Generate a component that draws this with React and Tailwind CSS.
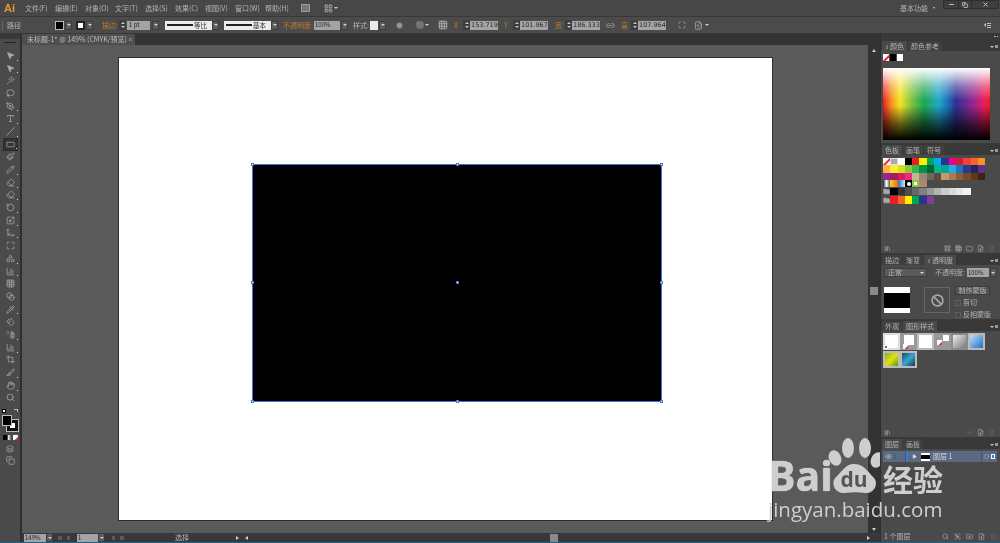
import {
  MousePointer2, Wand, Lasso, PenTool, Type, Slash, RectangleHorizontal, Paintbrush, Pencil, Eraser, RotateCcw,
  Scaling, Shapes, Grid3x3, Blend, Pipette, Droplets, SprayCan, ChartColumn, Crop, Slice, Hand, Search, Move3d,
  Layers, Copy, Eye, Play, Trash2, FilePlus, Folder, Link2, Ban, Minus, X, Circle, FolderPlus, Library,
  Maximize, LayoutGrid, FileImage, Group,
} from 'lucide-react';

const cjk = { fontFamily: '"Noto Sans CJK SC", "Liberation Sans", sans-serif' };

const menus = ['文件(F)', '编辑(E)', '对象(O)', '文字(T)', '选择(S)', '效果(C)', '视图(V)', '窗口(W)', '帮助(H)'];

const tools = [
  [MousePointer2, 1], [MousePointer2, 1], [Wand, 0], [Lasso, 0], [PenTool, 1], [Type, 1], [Slash, 1], [RectangleHorizontal, 1], [Paintbrush, 0],
  [Pencil, 1], [Eraser, 1], [Eraser, 1], [RotateCcw, 1], [Scaling, 1], [Move3d, 1], [Maximize, 0], [Shapes, 1], [ChartColumn, 1],
  [Grid3x3, 0], [Blend, 0], [Pipette, 1], [Droplets, 0], [SprayCan, 1], [ChartColumn, 1], [Crop, 0], [Slice, 1], [Hand, 1], [Search, 0],
];

const swatches = [
  ['none', 'reg', '#ffffff', '#000000', '#ed1c24', '#fff200', '#00a651', '#00aeef', '#2e3192', '#ec008c', '#cc1f36', '#ef4136', '#f26522', '#f7941d'],
  ['#fbb040', '#f9ed32', '#d7df23', '#8dc63f', '#39b54a', '#009444', '#006838', '#10b084', '#00a79d', '#27aae1', '#1c75bc', '#2b3990', '#262262', '#662d91'],
  ['#92278f', '#9e1f63', '#da1c5c', '#ee2a7b', '#c2b59b', '#9b8579', '#726658', '#594a42', '#c49a6c', '#a97c50', '#8b5e3c', '#754c29', '#603913', '#3c2415'],
];

const grays = ['#000000', '#333333', '#4d4d4d', '#666666', '#808080', '#999999', '#b3b3b3', '#cccccc', '#d9d9d9', '#e6e6e6', '#f2f2f2'];
const brights = ['#ed1c24', '#f26522', '#fff200', '#00a651', '#2e3192', '#7f3f98'];

function Label({ children, className = '' }) {
  return <span style={cjk} className={`text-[7px] leading-none whitespace-nowrap text-[#b4b4b4] ${className}`}>{children}</span>;
}

function DropArrow({ className = '' }) {
  return (
    <div className={`w-[7px] h-[9px] bg-[#5c5c5c] border border-[#3d3d3d] flex items-center justify-center shrink-0 ${className}`}>
      <div className="w-0 h-0 border-x-[2px] border-x-transparent border-t-[2px] border-t-[#d0d0d0]" />
    </div>
  );
}

function Spinner({ className = '' }) {
  return (
    <div className={`w-[7px] h-[10px] bg-[#3d3d3d] flex flex-col items-center justify-center gap-[2px] shrink-0 ${className}`}>
      <div className="w-0 h-0 border-x-[2px] border-x-transparent border-b-[2px] border-b-[#c8c8c8]" />
      <div className="w-0 h-0 border-x-[2px] border-x-transparent border-t-[2px] border-t-[#c8c8c8]" />
    </div>
  );
}

function NumBox({ value, className = '' }) {
  return (
    <div className={`w-[28px] h-[9px] bg-[#a4a4a4] flex items-center pl-[1px] shrink-0 ${className}`}>
      <span className="text-[6.5px] leading-none text-[#2c2c2c] whitespace-nowrap" style={{ fontFamily: '"DejaVu Sans", sans-serif' }}>{value}</span>
    </div>
  );
}

function Orange({ children, className = '' }) {
  return <span style={cjk} className={`text-[7px] leading-none whitespace-nowrap text-[#bf7a2c] shrink-0 ${className}`}>{children}</span>;
}

function StrokePreview({ label, className = '' }) {
  return (
    <div className={`w-[47px] h-[9px] bg-[#ececec] flex items-center pl-[2px] gap-[1px] shrink-0 ${className}`}>
      <div className="w-[26px] h-[1.5px] bg-[#222]" />
      <span style={cjk} className="text-[6.5px] leading-none text-[#333]">{label}</span>
    </div>
  );
}

function NoneSwatch({ className = '' }) {
  return (
    <div className={`bg-white relative overflow-hidden ${className}`}>
      <div className="absolute left-[-3px] top-[3px] w-[14px] h-[1.5px] bg-[#e8262d] -rotate-45" />
    </div>
  );
}

function Tabs({ items, active, menu = true, marker = false }) {
  return (
    <div className="h-[11px] bg-[#383838] flex items-end pl-[1px] shrink-0">
      {items.map((t, i) => (
        <div key={t} className={`h-[10px] px-[3px] flex items-center ${i === active ? 'bg-[#4a4a4a]' : 'bg-[#404040]'} mr-[1px]`}>
          {marker && i === active && <span className="text-[5px] text-[#aaa] mr-[1px] leading-none">⇕</span>}
          <Label className={i === active ? '' : 'text-[#7f7f7f]'}>{t}</Label>
        </div>
      ))}
      {menu && (
        <div className="ml-auto mr-[2px] mb-[3px] flex items-center gap-[1px]">
          <div className="w-0 h-0 border-x-[2px] border-x-transparent border-t-[2px] border-t-[#c8c8c8]" />
          <div className="w-[3px] h-[3px] bg-[#999]" />
        </div>
      )}
    </div>
  );
}

function Footer({ left, icons }) {
  return (
    <div className="h-[9px] mt-auto flex items-center px-[3px] shrink-0">
      {left}
      <div className="ml-auto flex items-center gap-[4px] mr-[2px]">
        {icons.map(([Icon, dim], i) => <Icon key={i} size={7} strokeWidth={2} className={dim ? 'text-[#666]' : 'text-[#b0b0b0]'} />)}
      </div>
    </div>
  );
}

function Handle({ className }) {
  return <div className={`absolute w-[3px] h-[3px] bg-white border-[0.5px] border-[#4a70d8] ${className}`} />;
}

function StyleCell({ bg = 'bg-[#bbb]', children }) {
  return <div className={`relative ${bg} p-[2px]`}>{children}</div>;
}

export default function App() {
  return (
    <div style={cjk} className="relative w-[1000px] h-[543px] overflow-hidden flex flex-col bg-[#4a4a4a] blur-[0.3px]">
      {/* menu */}
      <div className="h-[17px] bg-[#474747] border-b border-[#383838] flex items-center shrink-0">
        <span className="w-[25px] pl-[4px] text-[11px] font-bold leading-none text-[#e49a2c]" style={{ fontFamily: '"Liberation Sans", sans-serif' }}>Ai</span>
        <div className="flex gap-[9px]">
          {menus.map(m => <Label key={m} className="w-[21px]">{m}</Label>)}
        </div>
        <div className="ml-[15px] w-[9px] h-[8px] bg-[#777] border border-[#999]" />
        <div className="ml-[14px] flex items-center gap-[1px]">
          <LayoutGrid size={9} className="text-[#c0c0c0]" />
          <div className="w-0 h-0 border-x-[2px] border-x-transparent border-t-[2px] border-t-[#ccc]" />
        </div>
        <Label className="ml-auto mr-[5px]">基本功能</Label>
        <div className="w-0 h-0 border-x-[1.5px] border-x-transparent border-t-[2px] border-t-[#ccc] mr-[8px]" />
        <div className="self-start flex h-[9px] w-[56px] bg-[#3e3e3e] border border-[#2e2e2e] rounded-b-[1px] mr-[1px]">
          <div className="w-[14px] flex items-center justify-center"><Minus size={7} strokeWidth={3} className="text-[#ccc]" /></div>
          <div className="w-[14px] flex items-center justify-center border-x border-[#2e2e2e]"><Copy size={6} strokeWidth={3} className="text-[#ccc]" /></div>
          <div className="flex-1 flex items-center justify-center"><X size={7} strokeWidth={3} className="text-[#ccc]" /></div>
        </div>
      </div>

      {/* control bar */}
      <div className="h-[17px] bg-[#4b4b4b] border-b border-[#383838] flex items-center shrink-0">
        <div className="w-[1px] h-[9px] bg-[#666] ml-[2px]" />
        <Label className="ml-[4px] w-[34px]">路径</Label>
        <div className="w-[9px] h-[9px] bg-black border border-[#bbb] ml-[14px] shrink-0" />
        <DropArrow className="ml-[1px]" />
        <div className="w-[9px] h-[9px] bg-white border-[2px] border-[#222] ml-[4px] shrink-0" />
        <DropArrow className="ml-[1px]" />
        <Orange className="ml-[9px] w-[15px]">描边:</Orange>
        <Spinner className="ml-[2px]" />
        <div className="w-[23px] h-[9px] bg-[#a4a4a4] flex items-center pl-[2px] ml-[1px]"><span className="text-[6px] leading-none text-[#222]">1 pt</span></div>
        <DropArrow className="ml-[2px]" />
        <StrokePreview label="等比" className="ml-[6px]" />
        <DropArrow className="ml-0" />
        <StrokePreview label="基本" className="ml-[5px]" />
        <DropArrow className="ml-0" />
        <Orange className="ml-[5px] w-[27px]">不透明度:</Orange>
        <div className="w-[26px] h-[9px] bg-[#a4a4a4] flex items-center pl-[1px] ml-[4px]"><span className="text-[6px] leading-none text-[#222]">100%</span></div>
        <DropArrow className="ml-[1px]" />
        <Label className="ml-[5px] w-[14px]">样式:</Label>
        <div className="w-[8px] h-[9px] bg-[#ececec] ml-[3px]" />
        <DropArrow className="ml-[1px]" />
        <div className="w-[7px] h-[7px] rounded-full bg-[#999] border border-[#666] ml-[10px]" />
        <Grid3x3 size={8} className="text-[#999] ml-[13px]" />
        <div className="w-0 h-0 border-x-[2px] border-x-transparent border-t-[2px] border-t-[#ccc] ml-[1px]" />
        <Grid3x3 size={10} className="text-[#bbb] ml-[9px]" />
        <Orange className="ml-[6px] w-[7px]">X</Orange>
        <Spinner className="ml-[2px]" />
        <NumBox value="153.719" className="ml-0" />
        <Orange className="ml-[6px] w-[7px]">Y</Orange>
        <Spinner className="ml-[2px]" />
        <NumBox value="101.967" className="ml-0" />
        <Orange className="ml-[7px] w-[8px]">宽</Orange>
        <Spinner className="ml-[2px]" />
        <NumBox value="186.333" className="ml-0" />
        <Link2 size={9} className="text-[#aaa] ml-[6px]" />
        <Orange className="ml-[6px] w-[8px]">高</Orange>
        <Spinner className="ml-[2px]" />
        <NumBox value="107.964" className="ml-0" />
        <Maximize size={8} className="text-[#aaa] ml-[12px]" />
        <FileImage size={9} className="text-[#aaa] ml-[8px]" />
        <div className="w-0 h-0 border-x-[2px] border-x-transparent border-t-[2px] border-t-[#ccc] ml-[2px]" />
        <div className="ml-auto mr-[9px] flex items-center gap-[1px]">
          <div className="w-0 h-0 border-y-[2px] border-y-transparent border-r-[2px] border-r-[#ccc]" />
          <div className="flex flex-col gap-[1px]">
            <div className="w-[4px] h-[1px] bg-[#bbb]" />
            <div className="w-[4px] h-[1px] bg-[#bbb]" />
            <div className="w-[4px] h-[1px] bg-[#bbb]" />
          </div>
        </div>
      </div>

      {/* work area */}
      <div className="flex-1 min-h-0 flex">
        {/* tools */}
        <div className="w-[22px] bg-[#4a4a4a] border-r-2 border-[#2f2f2f] flex flex-col items-center shrink-0">
          <div className="w-full h-[5px] bg-[#383838]" />
          <div className="w-[12px] h-[1px] bg-[#222] mt-[3px] mb-[6px]" />
          {tools.map(([Icon, more], i) => (
            <div key={i} className={`relative w-[15px] h-[12.7px] flex items-center justify-center ${i === 7 ? 'bg-[#333] border border-[#2b2b2b]' : ''}`}>
              <Icon size={9} strokeWidth={2} className="text-[#aaaaaa]" fill={i < 2 ? '#aaaaaa' : 'none'} />
              {more === 1 && <div className="absolute right-0 bottom-[1px] w-[1px] h-[1px] bg-[#ddd]" />}
            </div>
          ))}
          <div className="w-[16px] flex justify-between mt-[5px]">
            <div className="w-[4px] h-[4px] bg-white border border-black" />
            <div className="w-[4px] h-[3px] border-t border-r border-[#bbb]" />
          </div>
          <div className="relative w-[16px] h-[17px] mt-[2px]">
            <div className="absolute left-[5px] top-[5px] w-[11px] h-[11px] bg-white border-[3px] border-[#111] outline outline-[1px] outline-[#bbb]" />
            <div className="absolute left-0 top-0 w-[10px] h-[11px] bg-black border border-[#bbb]" />
          </div>
          <div className="flex gap-[1px] mt-[3px]">
            <div className="w-[4px] h-[5px] bg-black" />
            <div className="w-[4px] h-[5px] bg-[linear-gradient(to_right,#fff,#333)]" />
            <NoneSwatch className="w-[5px] h-[5px]" />
          </div>
          <Layers size={8} className="text-[#aaa] mt-[5px]" />
          <Copy size={9} className="text-[#aaa] mt-[3px]" />
        </div>

        {/* document */}
        <div className="flex-1 min-w-0 flex flex-col">
          <div className="h-[11px] bg-[#333333] flex shrink-0">
            <div className="h-full w-[113px] bg-[#4e4e4e] flex items-center pl-[5px]">
              <Label className="text-[#bdbdbd]">未标题-1* @ 149% (CMYK/预览)</Label>
              <X size={5} strokeWidth={3} className="ml-auto mr-[2px] text-[#bbb]" />
            </div>
          </div>
          <div className="flex-1 min-h-0 flex">
            <div className="flex-1 min-w-0 bg-[#5a5a5a] pt-[12px] pl-[96px]">
              <div className="w-[655px] h-[464px] bg-white border border-[#2d2d2d] pt-[106px] pl-[133px]">
                <div className="relative w-[410px] h-[238px] bg-black border border-[#4a70d8]">
                  <Handle className="-left-[2px] -top-[2px]" />
                  <Handle className="left-[203px] -top-[2px]" />
                  <Handle className="-right-[2px] -top-[2px]" />
                  <Handle className="-left-[2px] top-[116px]" />
                  <Handle className="left-[203px] top-[116px]" />
                  <Handle className="-right-[2px] top-[116px]" />
                  <Handle className="-left-[2px] -bottom-[2px]" />
                  <Handle className="left-[203px] -bottom-[2px]" />
                  <Handle className="-right-[2px] -bottom-[2px]" />
                </div>
              </div>
            </div>
            {/* vertical scrollbar */}
            <div className="w-[12px] bg-[#333333] flex flex-col items-center pt-[4px] pb-[2px] shrink-0">
              <div className="w-0 h-0 border-x-[2.5px] border-x-transparent border-b-[3px] border-b-[#ccc]" />
              <div className="w-[8px] h-[8px] bg-[#8a8a8a] mt-[235px]" />
              <div className="w-0 h-0 border-x-[2.5px] border-x-transparent border-t-[3px] border-t-[#ccc] mt-auto" />
            </div>
          </div>
          {/* status bar */}
          <div className="h-[9px] bg-[#383838] flex items-center shrink-0">
            <div className="w-[22px] h-[8px] bg-[#a4a4a4] ml-[2px] flex items-center pl-[1px]"><span className="text-[6px] leading-none text-[#222]">149%</span></div>
            <DropArrow className="ml-0 h-[8px]" />
            <div className="ml-[5px] flex gap-[5px] w-[16px]">
              <div className="w-[4px] h-[4px] bg-[#5a5a5a]" />
              <div className="w-[3px] h-[4px] bg-[#5a5a5a]" />
            </div>
            <div className="w-[21px] h-[8px] bg-[#a4a4a4] ml-[3px] flex items-center pl-[1px]"><span className="text-[6px] leading-none text-[#222]">1</span></div>
            <DropArrow className="ml-0 h-[8px]" />
            <div className="ml-[7px] flex gap-[5px] w-[32px]">
              <div className="w-[3px] h-[4px] bg-[#5a5a5a]" />
              <div className="w-[4px] h-[4px] bg-[#5a5a5a]" />
            </div>
            <Label className="ml-[31px] w-[56px]">选择</Label>
            <div className="w-0 h-0 border-y-[2.5px] border-y-transparent border-l-[3px] border-l-[#ccc] ml-[5px]" />
            <div className="w-0 h-0 border-y-[2.5px] border-y-transparent border-r-[3px] border-r-[#ccc] ml-[6px]" />
            <div className="flex-1 flex justify-center pr-[8px]">
              <div className="w-[8px] h-[8px] bg-[#8a8a8a]" />
            </div>
            <div className="w-0 h-0 border-y-[2.5px] border-y-transparent border-l-[3px] border-l-[#ccc] mr-[10px]" />
          </div>
        </div>

        {/* panels */}
        <div className="w-[120px] bg-[#3a3a3a] flex flex-col gap-[1px] border-l border-[#2f2f2f] shrink-0">
          <div className="h-[5px] bg-[#383838] flex justify-end items-center pr-[2px] gap-[1px]">
            <div className="w-[1.5px] h-[1.5px] bg-[#bbb]" />
            <div className="w-[1.5px] h-[1.5px] bg-[#bbb]" />
          </div>

          {/* color */}
          <div className="h-[103px] bg-[#4a4a4a] flex flex-col">
            <Tabs items={['颜色', '颜色参考']} active={0} marker />
            <div className="flex gap-[1px] mt-[3px] ml-[2px]">
              <NoneSwatch className="w-[6px] h-[7px]" />
              <div className="w-[6px] h-[7px] bg-black" />
              <div className="w-[6px] h-[7px] bg-white" />
            </div>
            <div className="mt-[7px] ml-[2px] w-[107px] h-[72px] bg-[linear-gradient(to_right,#ed1c24_0%,#f7941d_8%,#f5e626_16%,#7fc241_27%,#1fa84f_38%,#22a7c8_52%,#1c74bc_60%,#2e3192_68%,#92278f_84%,#ec1c60_95%,#ed1c24_100%)]">
              <div className="w-full h-full bg-[linear-gradient(to_bottom,#ffffff_0%,rgba(255,255,255,0.35)_25%,rgba(255,255,255,0)_45%,rgba(0,0,0,0)_52%,rgba(0,0,0,0.6)_78%,#000000_100%)]" />
            </div>
          </div>

          {/* swatches */}
          <div className="h-[109px] bg-[#4a4a4a] flex flex-col">
            <Tabs items={['色板', '画笔', '符号']} active={0} />
            <div className="mt-[3px] ml-[2px] flex flex-col">
              {swatches.map((row, r) => (
                <div key={r} className="flex h-[7.3px]">
                  {row.map((c, i) => c === 'none'
                    ? <NoneSwatch key={i} className="w-[7.3px] h-full" />
                    : c === 'reg'
                      ? <div key={i} className="w-[7.3px] h-full bg-[#aaa] border border-[#ddd]" />
                      : <div key={i} className="w-[7.3px] h-full" style={{ backgroundColor: c }} />)}
                </div>
              ))}
              <div className="flex h-[7.3px]">
                <div className="w-[7.3px] h-full bg-[linear-gradient(to_right,#222,#fff,#555)]" />
                <div className="w-[7.3px] h-full bg-[linear-gradient(to_right,#f7d417,#ef6a22)]" />
                <div className="w-[7.3px] h-full bg-[linear-gradient(to_right,#2272b9,#cfe5f6)]" />
                <div className="w-[7.3px] h-full bg-black flex items-center justify-center"><div className="w-[4px] h-[4px] rounded-full bg-white" /></div>
                <div className="w-[7.3px] h-full bg-[#8dc63f] flex items-center justify-center"><div className="w-[3px] h-[3px] bg-white" /></div>
                <div className="w-[7.3px] h-full bg-[#a98a6a]" />
              </div>
              <div className="flex items-center h-[7.3px] mt-[1px]">
                <Folder size={7} fill="#aaa" className="text-[#aaa] w-[7.3px]" />
                {grays.map(c => <div key={c} className="w-[7.3px] h-full" style={{ backgroundColor: c }} />)}
              </div>
              <div className="flex items-center h-[7.3px] mt-[1px]">
                <Folder size={7} fill="#aaa" className="text-[#aaa] w-[7.3px]" />
                {brights.map(c => <div key={c} className="w-[7.3px] h-full" style={{ backgroundColor: c }} />)}
              </div>
            </div>
            <Footer left={<Library size={7} className="text-[#b0b0b0]" />} icons={[[LayoutGrid], [Grid3x3], [Folder], [FilePlus], [Trash2, 1]]} />
          </div>

          {/* transparency */}
          <div className="h-[65px] bg-[#4a4a4a] flex flex-col">
            <Tabs items={['描边', '渐变', '透明度']} active={2} marker />
            <div className="flex items-center mt-[3px] ml-[3px]">
              <div className="w-[43px] h-[9px] bg-[#5b5b5b] border border-[#3d3d3d] flex items-center pl-[3px]">
                <Label>正常</Label>
                <div className="ml-auto mr-[2px] w-0 h-0 border-x-[2px] border-x-transparent border-t-[2px] border-t-[#ddd]" />
              </div>
              <Label className="ml-[8px]">不透明度:</Label>
              <div className="w-[22px] h-[9px] bg-[#a4a4a4] flex items-center pl-[1px] ml-[2px]"><span className="text-[6px] leading-none text-[#222]">100%</span></div>
              <DropArrow className="ml-[1px]" />
            </div>
            <div className="flex mt-[9px] ml-[3px]">
              <div className="w-[26px] h-[26px] bg-white flex items-center mt-[1px]"><div className="w-full h-[15px] bg-black" /></div>
              <div className="w-[26px] h-[26px] border border-[#666] ml-[14px] flex items-center justify-center mt-[1px]">
                <Ban size={13} strokeWidth={3} className="text-[#a8a8a8]" />
              </div>
              <div className="ml-[5px] flex flex-col">
                <div className="w-[35px] h-[9px] bg-[#555] border border-[#3b3b3b] flex items-center justify-center"><Label>制作蒙版</Label></div>
                <div className="flex items-center gap-[2px] mt-[4px]">
                  <div className="w-[6px] h-[6px] border border-[#5e5e5e]" />
                  <Label className="text-[#777]">剪切</Label>
                </div>
                <div className="flex items-center gap-[2px] mt-[5px]">
                  <div className="w-[6px] h-[6px] border border-[#5e5e5e]" />
                  <Label className="text-[#777]">反相蒙版</Label>
                </div>
              </div>
            </div>
          </div>

          {/* graphic styles */}
          <div className="h-[117px] bg-[#4a4a4a] flex flex-col">
            <Tabs items={['外观', '图形样式']} active={1} />
            <div className="mt-[2px] ml-[2px] grid grid-cols-[repeat(6,17px)] auto-rows-[17px] gap-y-[1px]">
              <StyleCell bg="bg-[#ddd]">
                <div className="w-full h-full bg-white" />
                <div className="absolute left-[1px] bottom-[1px] w-[4px] h-[4px] bg-[#666] border border-white" />
              </StyleCell>
              <StyleCell bg="bg-[#999]">
                <div className="w-[10px] h-[10px] bg-white ml-[2px]" />
                <NoneSwatch className="absolute left-[1px] bottom-[1px] w-[5px] h-[5px]" />
              </StyleCell>
              <StyleCell>
                <div className="w-full h-full bg-white" />
              </StyleCell>
              <StyleCell bg="bg-[#999]">
                <div className="w-[6px] h-[6px] bg-white ml-[7px]" />
                <NoneSwatch className="absolute left-[1px] bottom-[1px] w-[5px] h-[5px]" />
              </StyleCell>
              <StyleCell bg="bg-[#8a8a8a]">
                <div className="w-full h-full bg-[linear-gradient(135deg,#eee,#777)]" />
              </StyleCell>
              <StyleCell>
                <div className="w-full h-full bg-[linear-gradient(135deg,#bfe0f7,#1f6fc4)]" />
              </StyleCell>
              <StyleCell>
                <div className="w-full h-full bg-[linear-gradient(135deg,#7cb518,#e8df12,#4a9a1c)]" />
              </StyleCell>
              <StyleCell>
                <div className="w-full h-full bg-[linear-gradient(135deg,#14495a,#3aa6cf,#123c4b)]" />
              </StyleCell>
            </div>
            <Footer left={<Library size={7} className="text-[#b0b0b0]" />} icons={[[Link2, 1], [FilePlus], [Trash2, 1]]} />
          </div>

          {/* layers */}
          <div className="flex-1 bg-[#4a4a4a] flex flex-col">
            <Tabs items={['图层', '画板']} active={0} />
            <div className="h-[11px] bg-[#5b6a83] flex items-center ml-[2px] mr-[3px] mt-[2px]">
              <div className="w-[12px] flex justify-center border-r border-[#47536a]"><Eye size={7} className="text-[#ccc]" /></div>
              <div className="w-[11px] h-full border-r border-[#47536a]" />
              <div className="w-[2px] h-full bg-[#3f78e0]" />
              <Play size={5} fill="#ddd" className="text-[#ddd] ml-[4px]" />
              <div className="w-[9px] h-[8px] bg-white flex items-center ml-[4px]"><div className="w-full h-[4px] bg-black" /></div>
              <Label className="ml-[3px] text-[#d8d8d8]">图层 1</Label>
              <div className="ml-auto h-full flex items-center border-l border-[#47536a]">
                <Circle size={5} className="text-[#ccc] mx-[2px]" />
                <div className="w-[4px] h-[5px] bg-[#3f78e0] border-[0.5px] border-white mr-[2px]" />
              </div>
            </div>
            <div className="h-[9px] mt-auto mb-[1px] flex items-center px-[3px]">
              <Label>1 个图层</Label>
              <div className="ml-auto flex items-center gap-[5px]">
                <Search size={7} className="text-[#b0b0b0]" />
                <Group size={7} className="text-[#b0b0b0]" />
                <FolderPlus size={7} className="text-[#b0b0b0]" />
                <FilePlus size={7} className="text-[#b0b0b0]" />
                <Trash2 size={7} className="text-[#666]" />
              </div>
            </div>
          </div>
        </div>
      </div>

      <div className="h-[1px] bg-[#2a5f80] shrink-0" />

      {/* watermark */}
      <div className="absolute left-[768px] top-[437px] w-[180px] text-[#cecece]">
        <div className="flex items-end h-[58px]">
          <span className="text-[41px] font-bold leading-[36px] mb-[2px] w-[60px] [text-shadow:0_0_1px_#fff]" style={{ fontFamily: '"Open Sans", sans-serif' }}>Bai</span>
          <svg viewBox="0 0 52 58" className="w-[52px] h-[58px] shrink-0">
            <ellipse cx="20" cy="11" rx="6" ry="10" fill="#cecece" />
            <ellipse cx="37" cy="11" rx="6" ry="10" fill="#cecece" />
            <ellipse cx="7" cy="21" rx="6" ry="8" fill="#cecece" transform="rotate(-25 7 21)" />
            <ellipse cx="49" cy="23" rx="6" ry="8" fill="#cecece" transform="rotate(25 49 23)" />
            <path d="M26 27C17 27 14 35 8 40C2 46 7 57 17 56C24 55 31 55 37 56C46 57 51 47 46 41C40 35 36 27 26 27Z" fill="#cecece" />
            <text x="26" y="50" textAnchor="middle" fontSize="21" fontWeight="700" fill="#555" fontFamily="Open Sans, sans-serif">du</text>
          </svg>
          <span className="text-[30px] font-bold leading-[30px] mb-[2px] ml-[3px] whitespace-nowrap" style={cjk}>经验</span>
        </div>
        <div className="text-[20.5px] font-medium leading-[24px] mt-[2px] whitespace-nowrap" style={{ fontFamily: '"Open Sans", sans-serif' }}>jingyan.baidu.com</div>
      </div>
    </div>
  );
}
